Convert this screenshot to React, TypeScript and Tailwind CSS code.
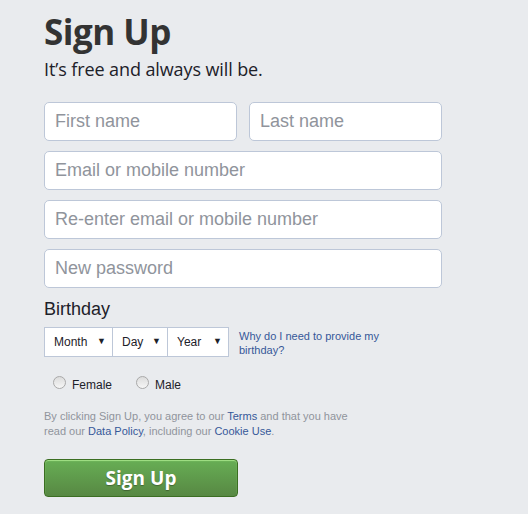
import { useState } from 'react';

const Field = ({ placeholder, className = '' }: { placeholder: string; className?: string }) => (
  <input
    placeholder={placeholder}
    className={`h-[39px] rounded-[5px] border border-[#bdc7d8] bg-white px-[10px] text-[18px] text-[#1d2129] placeholder:text-[#90949c] outline-none ${className}`}
  />
);

const Select = ({ label, width }: { label: string; width: string }) => (
  <div className={`flex h-[30px] items-center justify-between border border-[#bdc7d8] bg-white pl-[9px] pr-[6px] text-[12px] text-[#1d2129] ${width}`}>
    <span>{label}</span>
    <span className="text-[9px]">▼</span>
  </div>
);

const Radio = ({ label, checked, onClick }: { label: string; checked: boolean; onClick: () => void }) => (
  <label className="flex items-center gap-[6px] cursor-pointer" onClick={onClick}>
    <span className="h-[13px] w-[13px] rounded-full border border-[#a9a9a9] bg-gradient-to-b from-[#dcdcdc] to-[#f6f6f6] flex items-center justify-center -mt-[6px]">
      {checked && <span className="h-[5px] w-[5px] rounded-full bg-[#333]" />}
    </span>
    <span className="text-[12px] text-[#1d2129]">{label}</span>
  </label>
);

export default function App() {
  const [sex, setSex] = useState('');
  return (
    <div className="min-h-[514px] w-[528px] bg-[#e9ebee] pl-[44px] pt-[8px] font-['Liberation_Sans',Arial,sans-serif]">
      <h1 className="font-['Open_Sans',sans-serif] text-[35px] font-bold leading-[48px] text-[#333] tracking-[-0.5px]">Sign Up</h1>
      <p className="mt-[1px] font-['Open_Sans',sans-serif] text-[18px] leading-[24px] text-[#1d2129] tracking-[-0.1px]">
        It’s free and always will be.
      </p>

      <div className="mt-[21px] flex w-[398px] flex-col gap-[10px]">
        <div className="flex gap-[12px]">
          <Field placeholder="First name" className="w-[193px]" />
          <Field placeholder="Last name" className="w-[193px]" />
        </div>
        <Field placeholder="Email or mobile number" />
        <Field placeholder="Re-enter email or mobile number" />
        <Field placeholder="New password" />
      </div>

      <div className="mt-[9px] text-[18px] leading-[24px] text-[#1d2129]">Birthday</div>
      <div className="mt-[6px] flex items-start">
        <div className="flex">
          <Select label="Month" width="w-[69px]" />
          <Select label="Day" width="w-[56px] -ml-px" />
          <Select label="Year" width="w-[62px] -ml-px" />
        </div>
        <a href="#" className="ml-[10px] mt-[2px] w-[150px] text-[11px] leading-[14px] text-[#365899]">
          Why do I need to provide my birthday?
        </a>
      </div>

      <div className="mt-[19px] flex gap-[24px] pl-[9px]">
        <Radio label="Female" checked={sex === 'f'} onClick={() => setSex('f')} />
        <Radio label="Male" checked={sex === 'm'} onClick={() => setSex('m')} />
      </div>

      <div className="mt-[15px] text-[11px] leading-[15px] text-[#90949c]">
        <div>
          By clicking Sign Up, you agree to our <a href="#" className="text-[#365899]">Terms</a> and that you have
        </div>
        <div>
          read our <a href="#" className="text-[#365899]">Data Policy</a>, including our{' '}
          <a href="#" className="text-[#365899]">Cookie Use</a>.
        </div>
      </div>

      <button className="mt-[20px] flex h-[38px] w-[194px] items-center justify-center rounded-[4px] border border-[#3b6e22] bg-gradient-to-b from-[#67ae55] to-[#578843] font-['Open_Sans',sans-serif] text-[19px] font-bold text-white [text-shadow:0_1px_1px_rgba(0,0,0,0.3)] shadow-[inset_0_1px_1px_#a4e388]">
        Sign Up
      </button>
    </div>
  );
}
